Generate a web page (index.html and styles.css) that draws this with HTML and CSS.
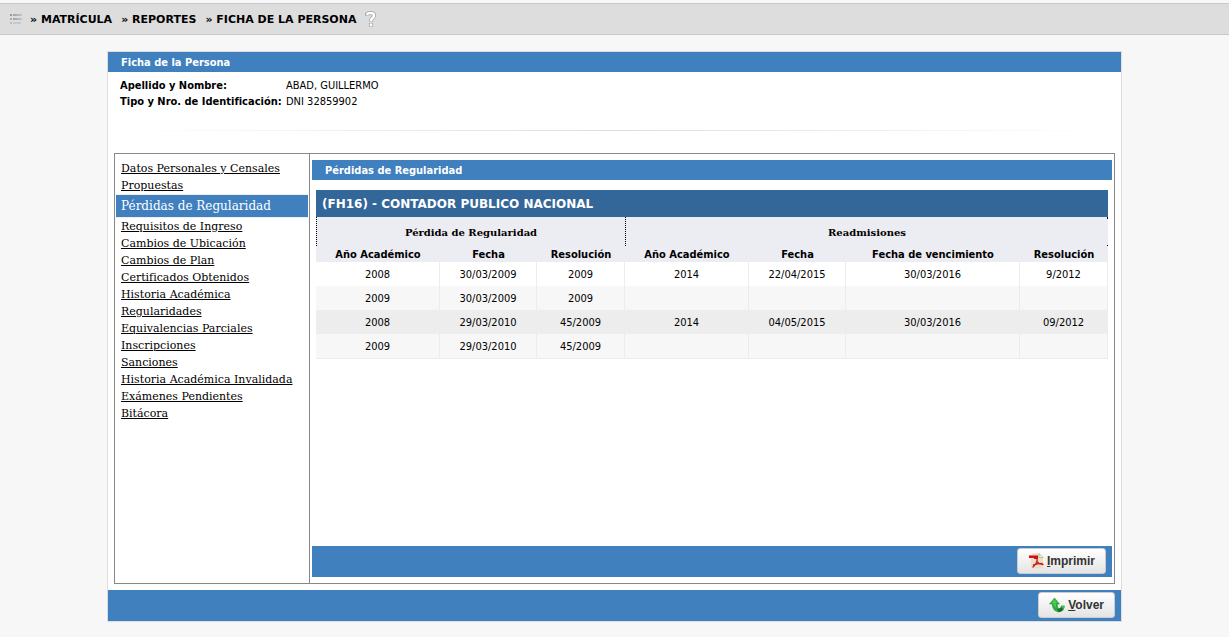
FILE: index.html
```html
<!DOCTYPE html>
<html lang="es">
<head>
<meta charset="utf-8">
<title>Ficha de la Persona</title>
<link rel="stylesheet" href="styles.css">
</head>
<body>
<header class="topbar">
  <svg class="topbar-menu" width="12" height="12" viewBox="0 0 12 12" aria-hidden="true">
    <defs><linearGradient id="fade"><stop offset="0" stop-color="#a2a2a2"/><stop offset="1" stop-color="#c6c6c6"/></linearGradient></defs>
    <path fill="#999" d="M0 1h2v2H0z"/><path fill="#aaa" d="M0 5h2v2H0z"/><path fill="#bbb" d="M0 9h2v2H0z"/>
    <path fill="url(#fade)" d="M3 1h9v2H3zM3 5h9v2H3z"/><path fill="#c9c9c9" d="M3 9h8v2H3z"/>
  </svg>
  <h1 class="topbar-title"><span>» MATRÍCULA</span> <span>» REPORTES</span> <span>» FICHA DE LA PERSONA</span></h1>
  <svg class="topbar-help" width="12" height="18" viewBox="0 0 12 18" aria-hidden="true">
    <path fill="none" stroke="#a0a0a0" stroke-width="4" stroke-linejoin="round" d="M2 5.500V4Q3 3 5.500 3Q9 3 9 5.500Q9 7 7 8.500Q6 9.500 6 12M6 13v4"/>
    <path fill="none" stroke="#fff" stroke-width="2.600" d="M1.500 4.500Q3 3 5.500 3Q9 3 9 5.500Q9 7 7 8.500Q6 9.500 6 11.500M6 13.500v3"/>
  </svg>
</header>
<main class="page">
  <section class="card">
    <h2 class="bar">Ficha de la Persona</h2>
    <dl class="person">
      <dt>Apellido y Nombre:</dt><dd>ABAD, GUILLERMO</dd>
      <dt>Tipo y Nro. de Identificación:</dt><dd>DNI 32859902</dd>
    </dl>
    <hr class="rule">
    <div class="panel">
      <nav class="menu">
        <a href="#">Datos Personales y Censales</a>
        <a href="#">Propuestas</a>
        <a href="#" class="current" aria-current="page">Pérdidas de Regularidad</a>
        <a href="#">Requisitos de Ingreso</a>
        <a href="#">Cambios de Ubicación</a>
        <a href="#">Cambios de Plan</a>
        <a href="#">Certificados Obtenidos</a>
        <a href="#">Historia Académica</a>
        <a href="#">Regularidades</a>
        <a href="#">Equivalencias Parciales</a>
        <a href="#">Inscripciones</a>
        <a href="#">Sanciones</a>
        <a href="#">Historia Académica Invalidada</a>
        <a href="#">Exámenes Pendientes</a>
        <a href="#">Bitácora</a>
      </nav>
      <section class="detail">
        <h3 class="bar">Pérdidas de Regularidad</h3>
        <div class="report">
          <h4 class="report-title">(FH16) - CONTADOR PUBLICO NACIONAL</h4>
          <table class="grid">
            <colgroup><col class="c-year"><col class="c-date"><col class="c-res"><col class="c-year"><col class="c-date"><col class="c-due"><col class="c-res"></colgroup>
            <thead>
              <tr class="groups"><th colspan="3" scope="colgroup">Pérdida de Regularidad</th><th colspan="4" scope="colgroup">Readmisiones</th></tr>
              <tr class="heads"><th scope="col">Año Académico</th><th scope="col">Fecha</th><th scope="col">Resolución</th><th scope="col">Año Académico</th><th scope="col">Fecha</th><th scope="col">Fecha de vencimiento</th><th scope="col">Resolución</th></tr>
            </thead>
            <tbody>
              <tr class="plain"><td>2008</td><td>30/03/2009</td><td>2009</td><td>2014</td><td>22/04/2015</td><td>30/03/2016</td><td>9/2012</td></tr>
              <tr><td>2009</td><td>30/03/2009</td><td>2009</td><td></td><td></td><td></td><td></td></tr>
              <tr class="shade"><td>2008</td><td>29/03/2010</td><td>45/2009</td><td>2014</td><td>04/05/2015</td><td>30/03/2016</td><td>09/2012</td></tr>
              <tr><td>2009</td><td>29/03/2010</td><td>45/2009</td><td></td><td></td><td></td><td></td></tr>
            </tbody>
          </table>
        </div>
        <div class="actions">
          <button type="button" class="btn">
            <svg width="16" height="16" viewBox="0 0 16 16" aria-hidden="true">
              <path fill="#e6e0c8" d="M4 .5h7l4 4v11H3V6z"/><path fill="#faf8f0" stroke="#b5ae8c" stroke-width=".8" d="M11 .5v4h4z"/>
              <path fill="#d80f12" d="M1 2h9v4H6V5H1z"/><path fill="#f06a60" d="M1 2h9v1H1z"/>
              <path fill="none" stroke="#cf2020" stroke-width="1.400" stroke-linecap="round" stroke-linejoin="round" d="M9 5.500Q9.500 8 8.500 9.500Q7.500 12 5 14M9 8.500Q10.500 11 15 11.500M5.500 12Q9 10.500 14 10.500"/>
            </svg>
            <span><u>I</u>mprimir</span>
          </button>
        </div>
      </section>
    </div>
    <div class="actions">
      <button type="button" class="btn">
        <svg width="16" height="16" viewBox="0 0 16 16" aria-hidden="true">
          <path fill="#2aac3c" stroke="#1d8f2e" stroke-width=".5" d="M5.500 1L10.500 7H8.300Q8 11 11 12.500L10 15Q3.500 14.500 3.200 7H.5z"/>
          <path fill="#4bc957" d="M5.500 2.200L8.700 6H6.800Q6.500 9 7.500 11Q4.500 9.500 4.300 6H2.200z"/>
          <path fill="#14702a" d="M8.500 11.500Q11.500 12.500 12 9h3.500Q15.500 14.500 10 15.200Q8.500 14 8.500 11.500z"/>
          <path fill="#43bd4f" d="M12 8.500h3.700Q15.500 11 14 12.800Q13.500 10.500 12 10z"/>
        </svg>
        <span><u>V</u>olver</span>
      </button>
    </div>
  </section>
</main>
</body>
</html>
```

FILE: styles.css
```css
* { box-sizing: border-box; }
body {
  margin: 0;
  padding-top: 3px;
  background: #f7f7f7;
  color: #000;
  font: 11px/16px "DejaVu Sans Condensed", "DejaVu Sans", sans-serif;
  font-stretch: condensed;
}
h1, h2, h3, h4, dl, dd { margin: 0; }

.topbar {
  display: flex;
  align-items: center;
  height: 32px;
  padding: 0 10px;
  border: solid #c8c8d0;
  border-width: 1px 0;
  background: #ddd;
}
.topbar-title {
  display: flex;
  gap: 9px;
  padding-top: 2px;
  margin: 0 9px 0 8px;
  font: bold 11px/16px "DejaVu Sans", sans-serif;
}

.page { padding: 16px 107px; }
.card {
  border: 1px solid #ddd;
  background: #fff;
}
.bar {
  padding: 2px 13px 0;
  background: #4080bf;
  color: #fff;
  font-size: 11px;
  line-height: 18px;
}
.person {
  display: grid;
  grid-template-columns: 166px 1fr;
  padding: 6px 12px 0;
}
.person dt { font-weight: bold; white-space: nowrap; }
.rule {
  height: 1px;
  margin: 20px 20px 22px;
  border: 0;
  background: linear-gradient(90deg, #fff, #ddd 50%, #fff);
}
.panel {
  display: flex;
  min-height: 431px;
  margin: 0 6px 6px;
  border: 1px solid #888;
}

.menu {
  display: flex;
  flex-direction: column;
  flex: 0 0 195px;
  padding: 6px 1px;
  border-right: 1px solid #888;
  font-family: "DejaVu Serif", serif;
  font-stretch: normal;
}
.menu a {
  padding-left: 5px;
  color: #000;
  line-height: 17px;
  white-space: nowrap;
}
.menu .current {
  border: solid #eee;
  border-width: 1px 0;
  background: #4080bf;
  color: #fff;
  font-size: 12px;
  line-height: 22px;
  text-decoration: none;
}

.detail {
  display: flex;
  flex: 1;
  flex-direction: column;
  padding: 6px 2px;
}
.report {
  flex: 1;
  padding: 10px 4px;
}
.report-title {
  padding: 2px 6px 0;
  background: #336699;
  color: #fff;
  font: bold 12px/25px "DejaVu Sans", sans-serif;
}
.grid {
  width: 100%;
  border-spacing: 0;
  table-layout: fixed;
  text-align: center;
}
.c-year { width: 124px; }
.c-date { width: 97px; }
.c-res { width: 88px; }
.c-due { width: 174px; }
.grid th, .grid td { padding: 2px 0 0; }
.groups th {
  height: 29px;
  border-left: 1px dotted #000;
  background: #ecedf2;
  font: bold 10px/16px "DejaVu Serif", serif;
}
.groups th:last-child {
  background:
    linear-gradient(#000, #000) right top / 1px 2px no-repeat,
    linear-gradient(#000, #000) right bottom / 1px 1px no-repeat,
    #ecedf2;
}
.heads th {
  height: 16px;
  background: #ecedf2;
  line-height: 14px;
}
.grid td {
  height: 24px;
  border-right: 1px solid #ececec;
  background: #f7f7f7;
}
.grid .plain td { background: #fff; }
.grid .shade td { background: #ededed; }
.grid tbody tr:last-child td { border-bottom: 1px solid #ececec; height: 25px; }

.actions {
  display: flex;
  justify-content: flex-end;
  padding: 2px 6px 3px;
  background: #4080bf;
}
.btn {
  display: flex;
  align-items: center;
  gap: 3px;
  height: 26px;
  padding: 0 10px;
  border: 1px solid #ccc;
  border-radius: 3px;
  background: linear-gradient(#fff, #e4e4e4);
  color: #333;
  font: bold 12px/16px "Liberation Sans", Arial, sans-serif;
}
```
